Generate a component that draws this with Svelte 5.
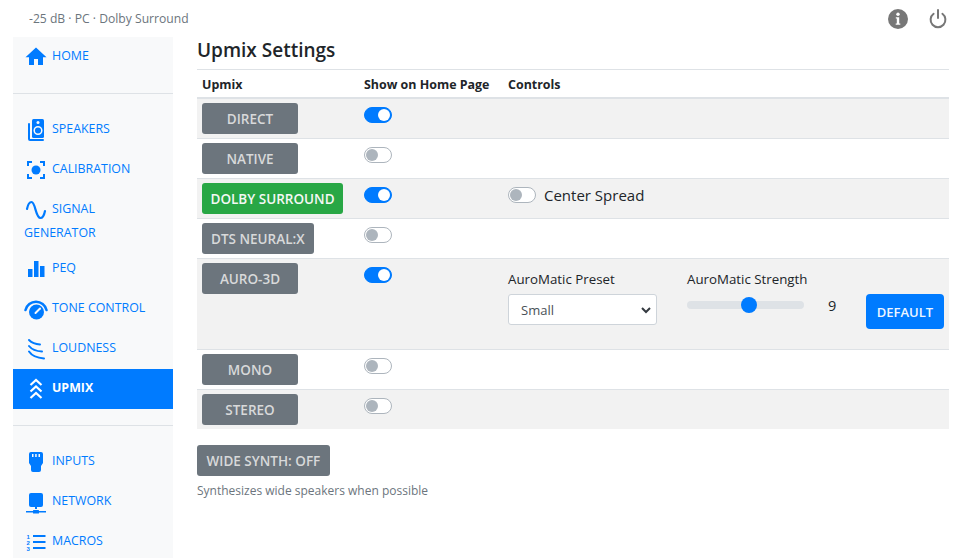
<script>
  const upmixes = [
    { name: 'DIRECT', on: true },
    { name: 'NATIVE', on: false },
    { name: 'DOLBY SURROUND', on: true, active: true, spread: true },
    { name: 'DTS NEURAL:X', on: false },
    { name: 'AURO-3D', on: true, auro: true },
    { name: 'MONO', on: false },
    { name: 'STEREO', on: false }
  ];
</script>

{#snippet toggle(on)}
  <span class="toggle" class:on><span class="knob"></span></span>
{/snippet}

<div class="page">
  <header class="top">
    <span class="status">-25 dB · PC · Dolby Surround</span>
    <div class="top-icons">
      <svg width="20" height="20" viewBox="0 0 20 20"><circle cx="10" cy="10" r="10" fill="#777"/><circle cx="10" cy="5.2" r="1.7" fill="#fff"/><path d="M7.8 8.2h3.4v6.2h1.1v1.4H7.7v-1.4h1.1V9.6h-1z" fill="#fff"/></svg>
      <svg width="20" height="20" viewBox="0 0 20 20" fill="none" stroke="#777" stroke-width="2" stroke-linecap="round"><path d="M10 1v8"/><path d="M5.6 4.800a7.400 7.400 0 1 0 8.800 0"/></svg>
    </div>
  </header>

  <div class="body">
    <nav class="side">
      <ul>
        <li><a href="#home">
          <svg class="ic" viewBox="0 0 24 28"><path d="M12 4.500 22.500 14.300H19V22h-5v-6h-4v6H5v-7.700H1.500z" fill="currentColor"/></svg>HOME</a></li>
      </ul>
      <hr />
      <ul>
        <li><a href="#speakers">
          <svg class="ic" viewBox="0 0 24 28"><path d="M5 8v15a1 1 0 0 0 1 1h13" fill="none" stroke="currentColor" stroke-width="2" stroke-linecap="round"/><rect x="8" y="3" width="12" height="19" rx="1.500" fill="currentColor"/><circle cx="14" cy="6.500" r="1.500" fill="#f8f9fa"/><circle cx="14" cy="14.500" r="3.800" fill="none" stroke="#f8f9fa" stroke-width="1.500"/></svg>SPEAKERS</a></li>
        <li><a href="#calibration">
          <svg class="ic" viewBox="0 0 24 28"><path d="M4 10V6h4M16 6h4v4M20 18v4h-4M8 22H4v-4" fill="none" stroke="currentColor" stroke-width="2"/><circle cx="12" cy="14" r="4.500" fill="currentColor"/></svg>CALIBRATION</a></li>
        <li class="two"><a href="#signal">
          <svg class="ic" viewBox="0 0 24 28"><path d="M3 13C4 8 5.500 6 7.500 6 11.500 6 11.500 22 16.500 22 18.500 22 20 20 21 15" fill="none" stroke="currentColor" stroke-width="2.200" stroke-linecap="round"/></svg>SIGNAL GENERATOR</a></li>
        <li><a href="#peq">
          <svg class="ic" viewBox="0 0 24 28"><path d="M4 14h4.500v8H4zM10 6h4.500v16H10zM16 11h4.500v11H16z" fill="currentColor"/></svg>PEQ</a></li>
        <li><a href="#tone">
          <svg class="ic" viewBox="0 0 24 28"><path d="M1.500 15a10.800 10.800 0 0 1 21 0" fill="none" stroke="currentColor" stroke-width="2.500" stroke-linecap="round"/><circle cx="12.500" cy="17" r="7.500" fill="currentColor"/><path d="M11.500 18 16 13.500" stroke="#f8f9fa" stroke-width="2" stroke-linecap="round"/></svg>TONE CONTROL</a></li>
        <li><a href="#loudness">
          <svg class="ic" viewBox="0 0 24 28"><g fill="none" stroke="currentColor" stroke-width="2" stroke-linecap="round"><path d="M5 5Q9 9 16 9.500"/><path d="M5 11Q9 16 18 16.500"/><path d="M5 16.500Q9 22.500 20 23.500"/></g></svg>LOUDNESS</a></li>
        <li class="active"><a href="#upmix">
          <svg class="ic" viewBox="0 0 24 28"><g fill="none" stroke="currentColor" stroke-width="2.200"><path d="M6.500 10 12 5l5.500 5"/><path d="M6.500 16.500 12 11.500l5.500 5"/><path d="M6.500 23 12 18l5.500 5"/></g></svg>UPMIX</a></li>
      </ul>
      <hr />
      <ul>
        <li><a href="#inputs">
          <svg class="ic" viewBox="0 0 24 28"><path d="M5 6a2 2 0 0 1 2-2h10a2 2 0 0 1 2 2v9l-2 3v4a2 2 0 0 1-2 2H9a2 2 0 0 1-2-2v-4l-2-3z" fill="currentColor"/><path d="M8 6h1.500v3H8zM11.200 6h1.500v3h-1.500zM14.500 6H16v3h-1.500z" fill="#f8f9fa"/></svg>INPUTS</a></li>
        <li><a href="#network">
          <svg class="ic" viewBox="0 0 24 28"><rect x="5" y="5" width="14" height="14" rx="2" fill="currentColor"/><path d="M11 19h2v2h-2z" fill="currentColor"/><path d="M2 23h20v1.500H2z" fill="currentColor"/><rect x="9" y="22" width="6" height="3.500" rx=".5" fill="currentColor"/></svg>NETWORK</a></li>
        <li><a href="#macros">
          <svg class="ic" viewBox="0 0 24 28"><path d="M9 7h12.500v2H9zM9 13h12.500v2H9zM9 19h12.500v2H9z" fill="currentColor"/><g fill="currentColor" font-family="'Liberation Sans',sans-serif" font-size="6" font-weight="700"><text x="2.500" y="10.500">1</text><text x="2.500" y="16.500">2</text><text x="2.500" y="22.500">3</text></g></svg>MACROS</a></li>
      </ul>
    </nav>

    <main class="main">
      <h1>Upmix Settings</h1>
      <table>
        <colgroup><col class="c1" /><col class="c2" /><col /></colgroup>
        <thead>
          <tr><th>Upmix</th><th>Show on Home Page</th><th>Controls</th></tr>
        </thead>
        <tbody>
          {#each upmixes as u}
            <tr>
              <td><button class="btn" class:green={u.active}>{u.name}</button></td>
              <td>{@render toggle(u.on)}</td>
              <td>
                {#if u.spread}
                  <div class="spread">{@render toggle(false)}<span>Center Spread</span></div>
                {:else if u.auro}
                  <div class="auro">
                    <div class="preset">
                      <label for="preset">AuroMatic Preset</label>
                      <select id="preset"><option>Small</option></select>
                    </div>
                    <div class="strength">
                      <label for="strength">AuroMatic Strength</label>
                      <div class="slider-row">
                        <input id="strength" type="range" min="1" max="16" value="9" />
                        <span class="val">9</span>
                      </div>
                    </div>
                    <button class="btn blue">DEFAULT</button>
                  </div>
                {/if}
              </td>
            </tr>
          {/each}
        </tbody>
      </table>
      <button class="btn wide">WIDE SYNTH: OFF</button>
      <p class="hint">Synthesizes wide speakers when possible</p>
    </main>
  </div>
</div>

<style>
  :global(body) {
    margin: 0;
    background: #fff;
    color: #212529;
    font-family: "Open Sans", "Noto Sans", sans-serif;
  }
  .page {
    height: 558px;
    overflow: hidden;
    display: flex;
    flex-direction: column;
  }
  .top {
    height: 37px;
    flex: none;
    display: flex;
    align-items: center;
    justify-content: space-between;
    padding: 0 17px 1px 29px;
    box-sizing: border-box;
  }
  .status {
    font-size: 12.150px;
    color: #6c757d;
  }
  .top-icons {
    display: flex;
    gap: 20px;
    margin-top: 1px;
  }
  .body {
    flex: 1;
    display: flex;
    padding-left: 13px;
    min-height: 0;
  }
  .side {
    width: 160px;
    flex: none;
    background: #f8f9fa;
    font-size: 12.400px;
    font-weight: 500;
  }
  .side ul {
    list-style: none;
    margin: 0;
    padding: 0;
  }
  .side hr {
    border: 0;
    border-top: 1px solid #dee2e6;
    margin: 16px 0;
  }
  .side a {
    display: block;
    padding: 7px 11px 9px;
    line-height: 24px;
    color: #007bff;
    text-decoration: none;
  }
  .two a {
    padding-bottom: 4px;
  }
  .active a {
    background: #007bff;
    color: #fff;
    font-weight: 700;
  }
  .ic {
    display: inline-block;
    width: 24px;
    height: 28px;
    margin: -1px 4px -3px 0;
    vertical-align: top;
  }
  .main {
    flex: 1;
    padding: 0 16px 0 24px;
    min-width: 0;
  }
  h1 {
    margin: 0;
    font-size: 19px;
    font-weight: 600;
    line-height: 26px;
    height: 32px;
  }
  table {
    width: 752px;
    border-collapse: collapse;
    table-layout: fixed;
  }
  .c1 { width: 162px; }
  .c2 { width: 144px; }
  th, td {
    padding: 4px 5px;
    text-align: left;
    vertical-align: top;
    border-top: 1px solid #dee2e6;
  }
  th {
    font-size: 12.450px;
    font-weight: 700;
    line-height: 20px;
    padding: 5px 5px 2px;
    border-bottom: 2px solid #dee2e6;
    height: 20px;
  }
  tbody tr:nth-child(odd) {
    background: #f2f2f2;
  }
  .btn {
    height: 31px;
    min-width: 96px;
    padding: 0 9px;
    border: 0;
    border-radius: 3px;
    background: #6c757d;
    color: #d8d9da;
    font: 600 13.500px "Open Sans", "Noto Sans", sans-serif;
    display: block;
  }
  .green {
    background: #28a745;
    color: #f4f8f5;
    padding: 0 8.500px;
  }
  .blue {
    background: #007bff;
    color: #eef5ff;
    min-width: 78px;
    height: 35px;
    margin-left: 22px;
    margin-top: 31px;
    border-radius: 4px;
    font-size: 13px;
  }
  .toggle {
    display: block;
    position: relative;
    width: 28px;
    height: 16px;
    box-sizing: border-box;
    margin-top: 4px;
    border: 1px solid #adb5bd;
    border-radius: 8px;
    background: #fff;
  }
  .knob {
    position: absolute;
    left: 1px;
    top: 1px;
    width: 12px;
    height: 12px;
    border-radius: 50%;
    background: #adb5bd;
  }
  .toggle.on {
    background: #007bff;
    border-color: #007bff;
  }
  .on .knob {
    left: 13px;
    background: #fff;
  }
  .spread {
    display: flex;
    align-items: flex-start;
    gap: 8px;
    font-size: 15px;
  }
  .spread span:last-child {
    line-height: 24px;
  }
  .auro {
    display: flex;
    align-items: flex-start;
    padding-bottom: 16px;
    font-size: 13.300px;
  }
  label {
    display: block;
    line-height: 20px;
    margin: 6px 0 5px;
  }
  select {
    display: block;
    width: 149px;
    height: 31px;
    padding: 0 24px 0 12px;
    box-sizing: border-box;
    appearance: none;
    border: 1px solid #ced4da;
    border-radius: 3px;
    background: #fff url("data:image/svg+xml,%3Csvg xmlns='http://www.w3.org/2000/svg' width='10' height='8' viewBox='0 0 10 8'%3E%3Cpath d='M1 2l4 4 4-4' fill='none' stroke='%23343a40' stroke-width='2'/%3E%3C/svg%3E") no-repeat right 5px center;
    color: #495057;
    font: 13px "Open Sans", "Noto Sans", sans-serif;
  }
  .strength {
    margin-left: 30px;
    width: 157px;
  }
  .slider-row {
    display: flex;
    align-items: center;
    height: 22px;
  }
  input[type="range"] {
    appearance: none;
    width: 117px;
    height: 16px;
    margin: 0;
    background: transparent;
  }
  input[type="range"]::-webkit-slider-runnable-track {
    height: 8px;
    border-radius: 4px;
    background: #dee2e6;
  }
  input[type="range"]::-webkit-slider-thumb {
    appearance: none;
    width: 16px;
    height: 16px;
    margin-top: -4px;
    border-radius: 50%;
    background: #007bff;
  }
  .val {
    margin-left: 24px;
    font-size: 14.500px;
  }
  .wide {
    margin-top: 16px;
    padding: 0 9.500px;
  }
  .hint {
    margin: 6px 0 0;
    font-size: 12px;
    line-height: 18px;
    color: #6c757d;
  }
</style>
